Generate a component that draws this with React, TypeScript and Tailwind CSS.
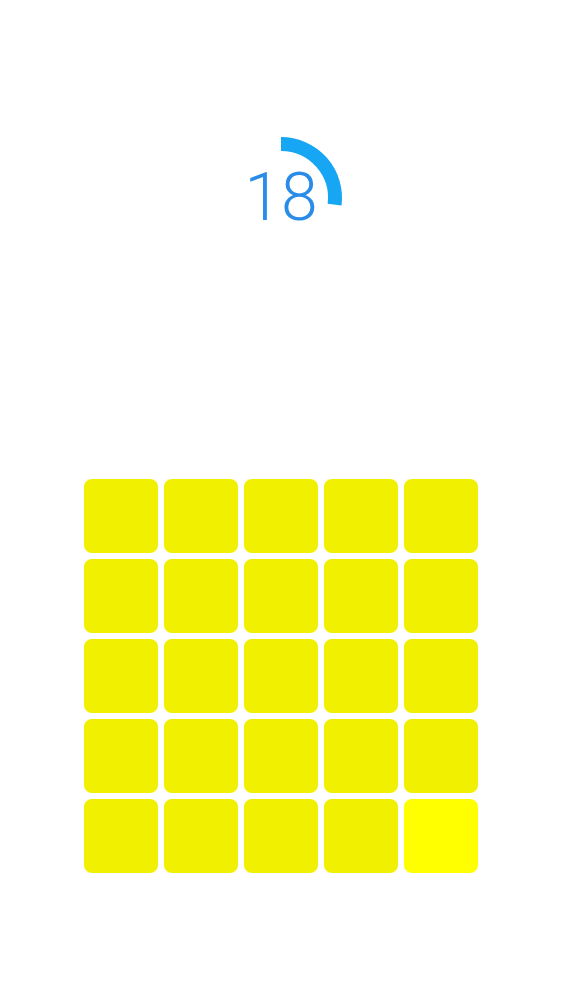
import React from "react";

const TILES = Array.from({ length: 25 }, (_, i) => i);

function Timer({ value }: { value: number }) {
  return (
    <div className="relative w-[140px] h-[140px]">
      <svg className="absolute inset-0" width="140" height="140" viewBox="0 0 140 140">
        <path
          d="M 70 16 A 54 54 0 0 1 123.6 76.6"
          fill="none"
          stroke="#17a6f3"
          strokeWidth="14"
        />
      </svg>
      <div className="absolute inset-0 flex items-center justify-center">
        <span
          className="text-[66px] leading-none font-light text-[#2a8ce9]"
          style={{ fontFamily: "Roboto, 'Liberation Sans', sans-serif" }}
        >
          {value}
        </span>
      </div>
    </div>
  );
}

export default function App() {
  return (
    <div className="min-h-[1000px] w-full bg-white flex flex-col items-center pt-[128px] pr-px">
      <Timer value={18} />
      <div className="mt-[211px] grid grid-cols-5 gap-[6px]">
        {TILES.map((i) => (
          <div
            key={i}
            className={`w-[74px] h-[74px] rounded-[8px] ${i === 24 ? "bg-[#ffff00]" : "bg-[#f0f000]"}`}
          />
        ))}
      </div>
    </div>
  );
}
